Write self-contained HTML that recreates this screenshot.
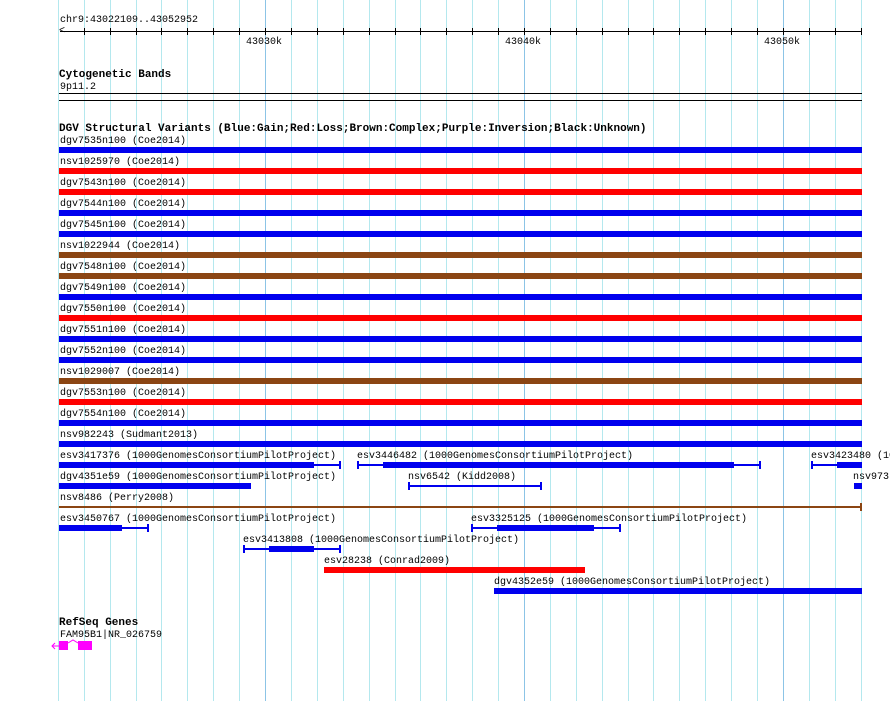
<!DOCTYPE html>
<html><head><meta charset="utf-8"><style>
body{margin:0;width:890px;height:701px;background:#fff;position:relative;overflow:hidden;font-family:"Liberation Mono","DejaVu Sans Mono",monospace;font-size:10px;color:#000}
div{position:absolute}
.t{white-space:pre;line-height:11px;height:11px;margin-top:1px}
.b{font-weight:bold;font-size:11px;line-height:12px;white-space:pre;margin-top:1px}
.g{top:0;height:701px;width:1px;background:#b4e8ee}
.G{top:0;height:701px;width:1px;background:#8cc4e6}
.bar{height:6px}
.bl{background:#0000ee}.rd{background:#ff0000}.br{background:#8b4513}
.th{height:2px;background:#0000ee}
.tk{width:2px;height:8px;background:#0000ee}
</style></head><body>
<div id="grid"></div>
<div class="t" style="left:60px;top:14px">chr9:43022109..43052952</div>
<div style="left:60px;top:31px;width:802px;height:1px;background:#000"></div>
<div class="t" style="left:59px;top:25px">&lt;</div>
<div class="t" style="left:246px;top:36px">43030k</div>
<div class="t" style="left:505px;top:36px">43040k</div>
<div class="t" style="left:764px;top:36px">43050k</div>

<div class="b" style="left:59px;top:68px">Cytogenetic Bands</div>
<div class="t" style="left:60px;top:81px">9p11.2</div>
<div style="left:59px;top:93px;width:803px;height:1px;background:#000"></div>
<div style="left:59px;top:100px;width:803px;height:1px;background:#000"></div>

<div class="b" style="left:59px;top:122px">DGV Structural Variants (Blue:Gain;Red:Loss;Brown:Complex;Purple:Inversion;Black:Unknown)</div>
<div id="rows"></div>

<div class="t" style="left:60px;top:450px">esv3417376 (1000GenomesConsortiumPilotProject)</div>
<div class="bar bl" style="left:59px;top:462px;width:255px"></div>
<div class="th" style="left:314px;top:464px;width:26px"></div><div class="tk" style="left:339px;top:461px"></div>
<div class="t" style="left:357px;top:450px">esv3446482 (1000GenomesConsortiumPilotProject)</div>
<div class="tk" style="left:357px;top:461px"></div><div class="th" style="left:357px;top:464px;width:26px"></div>
<div class="bar bl" style="left:383px;top:462px;width:351px"></div>
<div class="th" style="left:734px;top:464px;width:26px"></div><div class="tk" style="left:759px;top:461px"></div>
<div class="t" style="left:811px;top:450px">esv3423480 (1000</div>
<div class="tk" style="left:811px;top:461px"></div><div class="th" style="left:811px;top:464px;width:26px"></div>
<div class="bar bl" style="left:837px;top:462px;width:25px"></div>

<div class="t" style="left:60px;top:471px">dgv4351e59 (1000GenomesConsortiumPilotProject)</div>
<div class="bar bl" style="left:59px;top:483px;width:192px"></div>
<div class="t" style="left:408px;top:471px">nsv6542 (Kidd2008)</div>
<div class="tk" style="left:408px;top:482px"></div><div class="th" style="left:408px;top:485px;width:133px"></div><div class="tk" style="left:540px;top:482px"></div>
<div class="t" style="left:853px;top:471px">nsv973</div>
<div class="bar bl" style="left:854px;top:483px;width:8px"></div>

<div class="t" style="left:60px;top:492px">nsv8486 (Perry2008)</div>
<div style="left:59px;top:506px;width:803px;height:2px;background:#8b4513"></div>
<div style="left:860px;top:503px;width:2px;height:8px;background:#8b4513"></div>

<div class="t" style="left:60px;top:513px">esv3450767 (1000GenomesConsortiumPilotProject)</div>
<div class="bar bl" style="left:59px;top:525px;width:63px"></div>
<div class="th" style="left:122px;top:527px;width:26px"></div><div class="tk" style="left:147px;top:524px"></div>
<div class="t" style="left:471px;top:513px">esv3325125 (1000GenomesConsortiumPilotProject)</div>
<div class="tk" style="left:471px;top:524px"></div><div class="th" style="left:471px;top:527px;width:26px"></div>
<div class="bar bl" style="left:497px;top:525px;width:97px"></div>
<div class="th" style="left:594px;top:527px;width:26px"></div><div class="tk" style="left:619px;top:524px"></div>

<div class="t" style="left:243px;top:534px">esv3413808 (1000GenomesConsortiumPilotProject)</div>
<div class="tk" style="left:243px;top:545px"></div><div class="th" style="left:243px;top:548px;width:26px"></div>
<div class="bar bl" style="left:269px;top:546px;width:45px"></div>
<div class="th" style="left:314px;top:548px;width:26px"></div><div class="tk" style="left:339px;top:545px"></div>

<div class="t" style="left:324px;top:555px">esv28238 (Conrad2009)</div>
<div class="bar rd" style="left:324px;top:567px;width:261px"></div>
<div class="t" style="left:494px;top:576px">dgv4352e59 (1000GenomesConsortiumPilotProject)</div>
<div class="bar bl" style="left:494px;top:588px;width:368px"></div>

<div class="b" style="left:59px;top:616px">RefSeq Genes</div>
<div class="t" style="left:60px;top:629px">FAM95B1|NR_026759</div>
<svg style="position:absolute;left:48px;top:638px" width="50" height="16">
<path d="M4 8 H11 M7 5 L4 8 L7 11" stroke="#ff00ff" stroke-width="1" fill="none"/>
<rect x="11" y="3" width="9" height="9" fill="#ff00ff"/>
<path d="M20 5 L25 2 L30 5" stroke="#ff00ff" fill="none"/>
<rect x="30" y="3" width="14" height="9" fill="#ff00ff"/>
</svg>
<script>
var g=document.getElementById('grid'),h='';
for(var k=0;k<32;k++){var x=Math.round(57.8+25.9*k);if(x>862)break;var M=(k%10==8);
h+='<div class="'+(M?'G':'g')+'" style="left:'+x+'px"></div>';
if(x>=60)h+='<div style="left:'+x+'px;top:28px;width:1px;height:7px;background:#000"></div>';}
g.innerHTML=h;
var rows=[["dgv7535n100 (Coe2014)","bl"],["nsv1025970 (Coe2014)","rd"],["dgv7543n100 (Coe2014)","rd"],["dgv7544n100 (Coe2014)","bl"],["dgv7545n100 (Coe2014)","bl"],["nsv1022944 (Coe2014)","br"],["dgv7548n100 (Coe2014)","br"],["dgv7549n100 (Coe2014)","bl"],["dgv7550n100 (Coe2014)","rd"],["dgv7551n100 (Coe2014)","bl"],["dgv7552n100 (Coe2014)","bl"],["nsv1029007 (Coe2014)","br"],["dgv7553n100 (Coe2014)","rd"],["dgv7554n100 (Coe2014)","bl"],["nsv982243 (Sudmant2013)","bl"]];
var r='';rows.forEach(function(a,i){var y=147+21*i;
r+='<div class="t" style="left:60px;top:'+(y-12)+'px">'+a[0]+'</div><div class="bar '+a[1]+'" style="left:59px;top:'+y+'px;width:803px"></div>';});
document.getElementById('rows').innerHTML=r;
</script>
</body></html>
